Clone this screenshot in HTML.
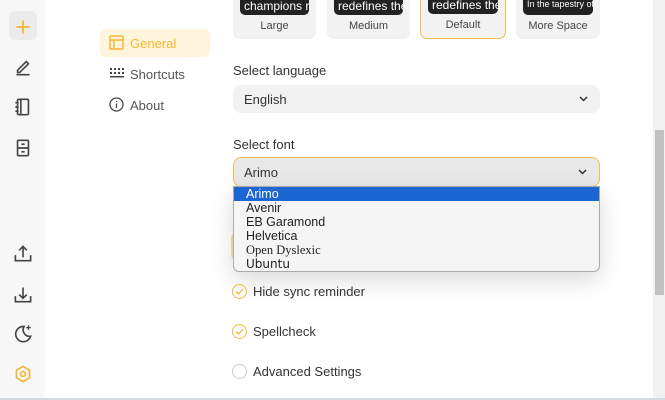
<!DOCTYPE html>
<html><head><meta charset="utf-8"><style>
*{margin:0;padding:0;box-sizing:border-box}
body{width:665px;height:400px;overflow:hidden;background:#fff;font-family:"Liberation Sans",Arial,sans-serif;position:relative;color:#333}
.side{position:absolute;left:0;top:0;width:45px;height:400px;background:#f7f7f7}
.ic{position:absolute;left:11px;width:24px;height:24px}
.abs{position:absolute}
.nav{position:absolute;left:100px;width:110px;height:28px;font-size:13px;color:#555;display:flex;align-items:center;padding-left:30px}
.card{position:absolute;top:-6px;height:45px;background:#f2f2f2;border-radius:7px;font-size:11px;color:#444;text-align:center}
.card .pv{position:absolute;left:7px;right:7px;top:0;height:21px;background:#222;border-radius:0 0 5px 5px;color:#fff;font-size:12px;overflow:hidden;white-space:nowrap;padding-top:5px;text-align:left;padding-left:4px}
.card .lb{position:absolute;left:0;right:0;top:26px}
.lbl{position:absolute;left:233px;font-size:13px;color:#333}
.sel{position:absolute;left:233px;width:367px;border-radius:8px;font-size:13px;padding-left:11px;display:flex;align-items:center}
.chev{position:absolute;right:12px;top:50%;margin-top:-4px}
.opt{height:14px;line-height:14px;font-size:12.5px;padding-left:12px;color:#222}
.chk{position:absolute;left:232px;font-size:13px;color:#333;display:flex;align-items:center}
.chk span.c{width:15px;height:15px;border-radius:50%;border:1.5px solid #f0b93a;margin-right:6px;display:flex;align-items:center;justify-content:center}
</style></head><body>
<div class="side">
 <div class="abs" style="left:9px;top:11px;width:28px;height:29px;background:#ebebeb;border-radius:6px"></div>
 <svg class="ic" style="top:15px" viewBox="0 0 22 22"><path d="M11 5v12M5 11h12" stroke="#f2b630" stroke-width="1.6" fill="none"/></svg>
 <svg class="ic" style="top:55px" viewBox="0 0 22 22" fill="none" stroke="#444" stroke-width="1.5"><path d="M5 18h12M6 14l8-8 2 2-8 8H6z"/></svg>
 <svg class="ic" style="top:95px" viewBox="0 0 22 22" fill="none" stroke="#444" stroke-width="1.5"><rect x="6" y="4" width="10" height="14" rx="1"/><path d="M9 4v14M4 7h3M4 11h3M4 15h3"/></svg>
 <svg class="ic" style="top:136px" viewBox="0 0 22 22" fill="none" stroke="#444" stroke-width="1.5"><rect x="6" y="4" width="10" height="14" rx="1"/><path d="M6 11h10M9.5 7.5h3M9.5 14.5h3"/></svg>
 <svg class="ic" style="top:241px" viewBox="0 0 22 22" fill="none" stroke="#444" stroke-width="1.5"><path d="M4 13v5h14v-5M11 15V5M7.5 8.5L11 5l3.5 3.5"/></svg>
 <svg class="ic" style="top:282px" viewBox="0 0 22 22" fill="none" stroke="#444" stroke-width="1.5"><path d="M4 13v5h14v-5M11 5v10M7.5 11.5L11 15l3.5-3.5"/></svg>
 <svg class="ic" style="top:321px" viewBox="0 0 22 22" fill="none" stroke="#444" stroke-width="1.5"><path d="M12 5a7 7 0 1 0 6 9a6 6 0 0 1-6-9z"/><path d="M16 4v4M14 6h4" stroke-width="1.2"/></svg>
 <svg class="ic" style="top:362px" viewBox="0 0 22 22" fill="none" stroke="#f2b630" stroke-width="1.5"><path d="M11 4l6 3.5v7L11 18l-6-3.5v-7z"/><circle cx="11" cy="11" r="2.2"/></svg>
</div>
<div class="abs" style="left:100px;top:29px;width:110px;height:28px;background:#fff5dc;border-radius:6px"></div>
<div class="nav" style="top:29px;color:#f2b630">General</div>
<svg class="abs" style="left:109px;top:35px" width="15" height="15" viewBox="0 0 15 15" fill="none" stroke="#f2b630" stroke-width="1.4"><rect x="1" y="1" width="13" height="13" rx="1"/><path d="M1 5h13M5 5v9"/></svg>
<div class="nav" style="top:60px">Shortcuts</div>
<svg class="abs" style="left:109px;top:67px" width="15" height="12" viewBox="0 0 15 12" fill="#444"><rect x="1" y="1" width="2" height="2"/><rect x="5" y="1" width="2" height="2"/><rect x="9" y="1" width="2" height="2"/><rect x="13" y="1" width="2" height="2"/><rect x="1" y="5" width="2" height="2"/><rect x="5" y="5" width="2" height="2"/><rect x="9" y="5" width="2" height="2"/><rect x="13" y="5" width="2" height="2"/><rect x="1" y="9" width="14" height="1.5"/></svg>
<div class="nav" style="top:91px">About</div>
<svg class="abs" style="left:109px;top:97px" width="15" height="15" viewBox="0 0 15 15" fill="none" stroke="#444" stroke-width="1.3"><circle cx="7.5" cy="7.5" r="6.5"/><path d="M7.5 6.5v4.5M7.5 4v1"/></svg>

<div class="card" style="left:233px;width:83px"><div class="pv">champions rel</div><div class="lb">Large</div></div>
<div class="card" style="left:327px;width:83px"><div class="pv">redefines the ve</div><div class="lb">Medium</div></div>
<div class="card" style="left:420px;width:86px;border:1.5px solid #f2c04a"><div class="pv" style="top:-2px">redefines the ver</div><div class="lb" style="top:24px">Default</div></div>
<div class="card" style="left:516px;width:84px"><div class="pv" style="font-size:9px">In the tapestry of Bea</div><div class="lb">More Space</div></div>

<div class="lbl" style="top:63px">Select language</div>
<div class="sel" style="top:85px;height:28px;background:#f2f2f2">English<svg class="chev" width="9" height="7" viewBox="0 0 9 7"><path d="M1 2l3.5 3.5L8 2" stroke="#333" stroke-width="1.5" fill="none"/></svg></div>
<div class="lbl" style="top:137px">Select font</div>
<div class="sel" style="top:157px;height:30px;background:#e8e8e8;border:1.5px solid #f2c04a;padding-left:10px">Arimo<svg class="chev" width="9" height="7" viewBox="0 0 9 7"><path d="M1 2l3.5 3.5L8 2" stroke="#333" stroke-width="1.5" fill="none"/></svg></div>

<div class="abs" style="left:231px;top:232px;width:6px;height:28px;background:#f5e0a8;border-radius:6px 0 0 6px"></div>
<div class="abs" style="left:233px;top:186px;width:367px;height:86px;background:#f5f5f5;border:1px solid #aaa;border-radius:0 0 6px 6px;box-shadow:0 8px 24px rgba(0,0,0,.15);overflow:hidden">
 <div class="opt" style="background:#1b66d2;color:#fff">Arimo</div>
 <div class="opt">Avenir</div>
 <div class="opt">EB Garamond</div>
 <div class="opt">Helvetica</div>
 <div class="opt" style="font-family:'Liberation Serif',serif">Open Dyslexic</div>
 <div class="opt" style="font-family:'DejaVu Sans',sans-serif;font-size:12px">Ubuntu</div>
</div>

<div class="chk" style="top:284px"><span class="c"><svg width="9" height="7" viewBox="0 0 9 7"><path d="M1 3.5l2.5 2.5L8 1" stroke="#f0b93a" stroke-width="1.3" fill="none"/></svg></span>Hide sync reminder</div>
<div class="chk" style="top:324px"><span class="c"><svg width="9" height="7" viewBox="0 0 9 7"><path d="M1 3.5l2.5 2.5L8 1" stroke="#f0b93a" stroke-width="1.3" fill="none"/></svg></span>Spellcheck</div>
<div class="chk" style="top:364px"><span class="c" style="border-color:#ccc"></span>Advanced Settings</div>

<div class="abs" style="left:653px;top:0;width:12px;height:400px;background:#f1f1f1"></div>
<div class="abs" style="left:655px;top:130px;width:9px;height:165px;background:#c1c1c1"></div>
<div class="abs" style="left:0;top:398px;width:665px;height:2px;background:#d5dade"></div>
</body></html>
